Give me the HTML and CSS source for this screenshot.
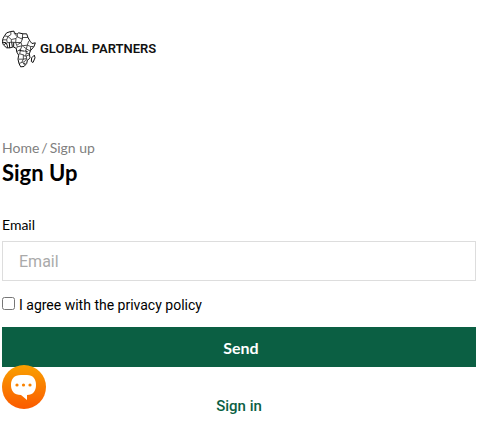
FILE: index.html
```
<!DOCTYPE html>
<html lang="en">
<head>
    <meta charset="UTF-8">
    <meta name="viewport" content="width=device-width, initial-scale=1.0">
    <title>Sign Up</title>
    <link rel="stylesheet" href="styles.css">
</head>
<body>
    <header class="header">
        <a href="#" class="logo">
            <svg class="logo-map" viewBox="6 6 102 111" aria-hidden="true">
                <path class="coast" d="M20 13L32 9L42 8L43 13L51 17L56 13L69 16L80 16L84 27L90 38L96 45L106 43L102 54L91 67L88 76L90 88L82 96L80 105L72 114L62 115L57 105L54 92L56 80L50 70L49 60L40 55L30 58L20 58L10 49L7 40L9 30L14 21Z"/>
                <path class="coast" d="M103 80L105 88L99 102L94 99L95 88Z"/>
                <path class="border" d="M14 22L24 24L33 18L32 9M24 24L34 33L48 30L52 25L42 14M52 25L52 17M52 25L67 32L68 16M67 32L67 27L84 27M9 34L20 34L24 24M20 34L22 43L34 41L34 33M48 30L47 42L34 41M47 42L63 42L67 32M63 42L66 52L82 50L86 38M82 50L92 54L101 54M92 54L91 67M82 50L79 61L91 68M66 52L52 55L49 60M52 55L47 42M63 42L52 49M66 52L62 62L51 69M62 62L59 76L70 79L76 84L79 74L77 67L79 61L70 54M79 74L88 76M56 79L59 76M56 92L70 92L70 79M70 92L80 90L79 82L88 79M70 92L65 102L57 105M65 102L73 100L79 92M80 90L82 97M76 105L72 108L70 104Z"/>
                <path class="coast" d="M8 41L18 43L22 51L22 58M13 49L18 43M28 42L29 58M35 41L37 55M41 42L41 55M76 67L83 70M58 66L74 68"/>
            </svg>
            <span class="logo-name">GLOBAL PARTNERS</span>
        </a>
    </header>
    <main class="content">
        <nav class="breadcrumb">
            <a href="#">Home</a>
            <span>/</span>
            <span>Sign up</span>
        </nav>
        <h1>Sign Up</h1>
        <form class="signup-form">
            <label class="field-label" for="email">Email</label>
            <input type="email" class="field" id="email" name="email" placeholder="Email">
            <div class="agree">
                <input type="checkbox" id="agree" name="agree">
                <label for="agree">I agree with the privacy policy</label>
            </div>
            <button type="submit" class="button">Send</button>
        </form>
        <a href="#" class="signin">Sign in</a>
    </main>
    <button type="button" class="chat" aria-label="Open chat">
        <svg viewBox="0 0 44 44" aria-hidden="true">
            <path fill="#fff" d="M19 10H25C31 10 34 14 34 20C34 26 31 30 25 30V35L19 30C12 30 9 26 9 20C9 14 12 10 19 10Z"/>
            <circle class="dot" cx="15" cy="20" r="1.6"/>
            <circle class="dot" cx="21.5" cy="20" r="1.6"/>
            <circle class="dot" cx="28" cy="20" r="1.6"/>
        </svg>
    </button>
</body>
</html>
```
FILE: styles.css
```
* {
    box-sizing: border-box;
}
body {
    margin: 0;
    padding: 0 5px 0 2px;
    font-family: Lato, sans-serif;
    font-size: 14px;
    line-height: 20px;
    color: #000;
    background-color: #fff;
}
a {
    color: inherit;
    text-decoration: none;
}
.header {
    padding: 30px 0 70px;
}
.logo {
    display: inline-flex;
    align-items: center;
    gap: 4px;
    vertical-align: top;
}
.logo-map {
    width: 34px;
    height: 38px;
    fill: none;
    stroke-linejoin: round;
}
.coast {
    stroke: #111;
    stroke-width: 3;
}
.border {
    stroke: #222;
    stroke-width: 2.4;
}
.logo-name {
    font-family: Roboto, sans-serif;
    font-size: 13px;
    font-weight: 600;
    color: #111;
}
.breadcrumb {
    display: flex;
    gap: 2px;
    color: #808080;
}
h1 {
    margin: 0 0 28px;
    font-size: 22px;
    font-weight: 700;
    line-height: 29px;
}
.field-label {
    display: block;
    margin-bottom: 6px;
}
.field {
    display: block;
    width: 100%;
    height: 40px;
    padding: 0 16px;
    border: 1px solid #ddd;
    border-radius: 0;
    font-family: Roboto, sans-serif;
    font-size: 16px;
}
.field::placeholder {
    color: #aaa;
}
.agree {
    display: flex;
    align-items: center;
    gap: 4px;
    padding: 14px 0 12px;
    font-family: Roboto, sans-serif;
}
.agree input {
    margin: 0 0 3px;
}
.button {
    display: block;
    width: 100%;
    height: 40px;
    padding: 0 4px 0 8px;
    border: none;
    background-color: #0b5f43;
    color: #fff;
    font-family: Lato, sans-serif;
    font-size: 16px;
    font-weight: 700;
    cursor: pointer;
}
.signin {
    display: block;
    margin-top: 29px;
    text-align: center;
    font-family: Roboto, sans-serif;
    font-size: 15px;
    font-weight: 500;
    color: #0b5f43;
}
.chat {
    position: fixed;
    left: 2px;
    bottom: 16px;
    width: 44px;
    height: 44px;
    padding: 0;
    border: none;
    border-radius: 50%;
    background: linear-gradient(#f9a000, #fb5a00);
    cursor: pointer;
}
.chat svg {
    display: block;
}
.dot {
    fill: #f98200;
}
```
